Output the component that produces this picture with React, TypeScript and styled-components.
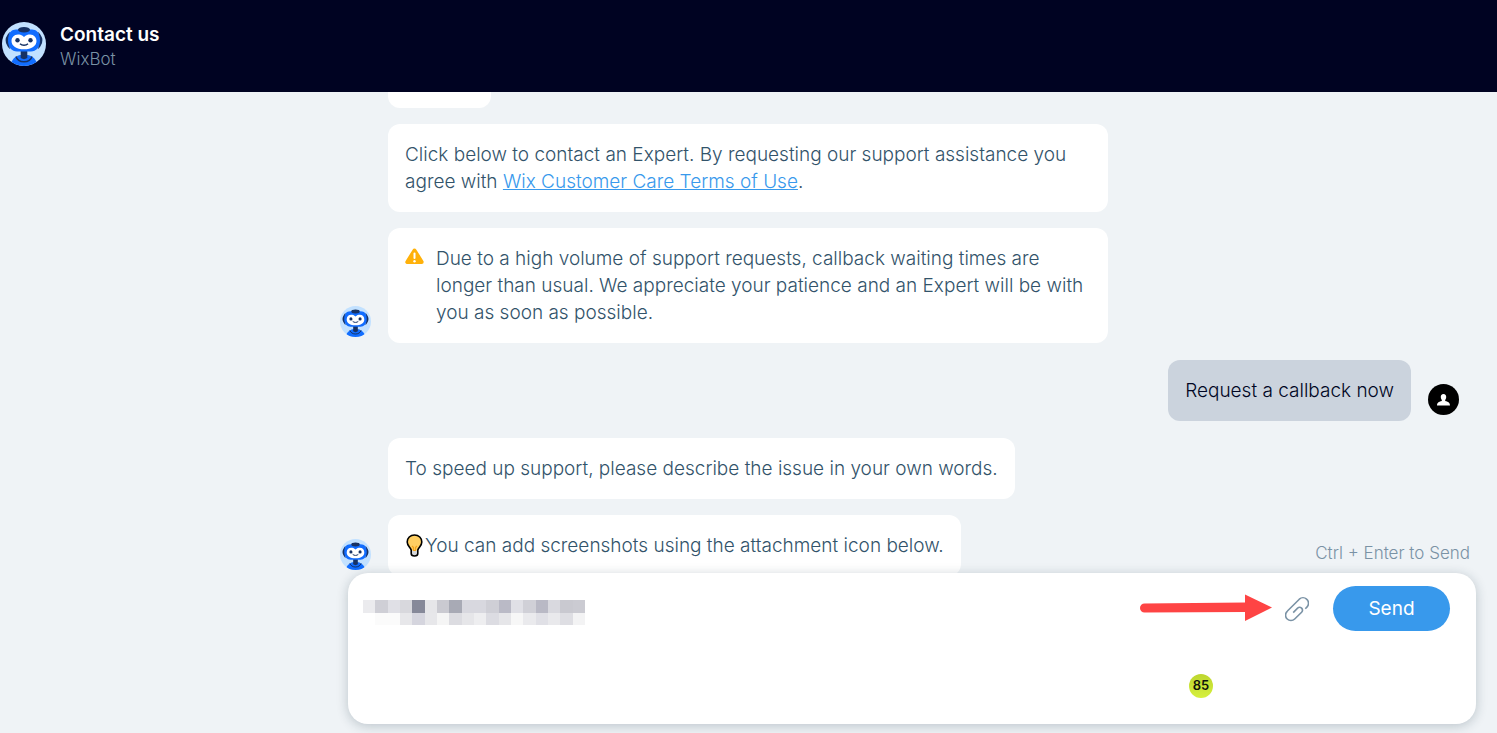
import React from "react";
import styled, { createGlobalStyle } from "styled-components";

const GlobalStyle = createGlobalStyle`
  *, *::before, *::after { box-sizing: border-box; }
  body {
    margin: 0;
    background: #eff3f6;
    font-family: "Inter", "Liberation Sans", sans-serif;
  }
`;

const Page = styled.div`
  display: flex;
  flex-direction: column;
  height: 100vh;
  overflow: hidden;
`;

const Header = styled.header`
  display: flex;
  align-items: center;
  gap: 14px;
  flex: none;
  height: 92px;
  padding: 0 2px 4px;
  background: #000322;
`;

const HeaderText = styled.div`
  display: flex;
  flex-direction: column;
  padding-top: 4px;
`;

const Title = styled.h1`
  margin: 0;
  font-size: 19px;
  line-height: 25px;
  font-weight: 600;
  color: #ffffff;
`;

const Subtitle = styled.span`
  font-size: 17px;
  line-height: 24px;
  font-weight: 300;
  color: #7a92a5;
`;

const Messages = styled.main`
  display: flex;
  flex-direction: column;
  justify-content: flex-end;
  gap: 17px;
  flex: 1;
  min-height: 0;
  overflow: hidden;
  padding: 0 38px 0 340px;
`;

const Group = styled.section<{ $own?: boolean }>`
  display: flex;
  flex: none;
  align-items: flex-end;
  justify-content: ${(p) => (p.$own ? "flex-end" : "flex-start")};
  gap: 17px;
`;

const Stack = styled.div`
  display: flex;
  flex-direction: column;
  align-items: flex-start;
  gap: 16px;
`;

const AvatarSlot = styled.div`
  display: flex;
  flex: none;
  padding-bottom: 6px;
`;

const Bubble = styled.div<{ $own?: boolean }>`
  display: flex;
  gap: 12px;
  max-width: 720px;
  padding: 17px;
  border-radius: 12px;
  font-size: 19px;
  line-height: 27px;
  font-weight: 300;
  background: ${(p) => (p.$own ? "#cbd3dd" : "#ffffff")};
  color: ${(p) => (p.$own ? "#000624" : "#32536a")};
`;

const ShortBubble = styled(Bubble)`
  width: 103px;
  height: 61px;
`;

const BulbBubble = styled(Bubble)`
  gap: 0;
`;

const Paragraph = styled.p`
  margin: 0;
`;

const TermsLink = styled.a`
  color: #3899ec;
  text-decoration: underline;
`;

const Icon = styled.svg`
  display: block;
  flex: none;
`;

const Composer = styled.form`
  position: relative;
  z-index: 1;
  display: flex;
  align-items: flex-start;
  gap: 24px;
  flex: none;
  height: 151px;
  margin: -3px 21px 9px 348px;
  padding: 13px 26px 13px 15px;
  border-radius: 20px;
  background: #ffffff;
  box-shadow: 0 2px 12px rgba(22, 45, 61, 0.24);
`;

const Field = styled.div`
  position: relative;
  flex: 1;
  align-self: stretch;
`;

const Input = styled.textarea`
  display: block;
  width: 100%;
  height: 100%;
  padding: 10px 0;
  border: 0;
  outline: 0;
  resize: none;
  background: transparent;
  font: inherit;
  font-size: 19px;
  line-height: 27px;
  color: #32536a;
`;

const Redaction = styled.svg`
  position: absolute;
  top: 14px;
  left: 0;
  pointer-events: none;
`;

const Arrow = styled.svg`
  position: absolute;
  top: 8px;
  right: -11px;
  pointer-events: none;
`;

const Score = styled.span`
  position: absolute;
  right: 48px;
  bottom: 13px;
  width: 24px;
  height: 24px;
  border-radius: 50%;
  background: linear-gradient(#bdd62f, #d6f03d);
  font-size: 13px;
  line-height: 23px;
  font-weight: 600;
  text-align: center;
  color: #10140a;
`;

const AttachButton = styled.button`
  display: flex;
  align-items: center;
  height: 45px;
  padding: 0;
  border: 0;
  background: none;
  cursor: pointer;
`;

const SendButton = styled.button`
  width: 117px;
  height: 45px;
  padding: 0;
  border: 0;
  border-radius: 23px;
  background: #3899ec;
  font: inherit;
  font-size: 19px;
  line-height: 27px;
  color: #ffffff;
  cursor: pointer;
`;

const Hint = styled.span`
  position: absolute;
  right: 6px;
  bottom: 100%;
  padding-bottom: 8px;
  font-size: 17px;
  line-height: 24px;
  font-weight: 300;
  color: #7a92a5;
`;

const BotAvatar = ({ size }: { size: number }) => (
  <Icon width={size} height={size} viewBox="0 0 44 44" role="img" aria-label="WixBot">
    <clipPath id={`bot-${size}`}>
      <circle cx="22" cy="22" r="22" />
    </clipPath>
    <g clipPath={`url(#bot-${size})`}>
      <rect width="44" height="44" fill="#c2e1ff" />
      <path d="M6.500 13.500q-3.500 5 0 10zM37.500 13.500q3.500 5 0 10z" fill="#173264" stroke="#173264" strokeWidth="2.400" />
      <path d="M8 46c0-7 5-12 10-13h8c5 1 10 6 10 13z" fill="#116dff" />
      <path d="M14 34.500c2 7 14 7 16 0" fill="none" stroke="#173264" strokeWidth="1.4" />
      <path d="M18.700 27h6.600v9c-2 1.500-4.600 1.500-6.600 0z" fill="#173264" />
      <path d="M22 9c3-2 9-2 12-.5 3 2 4 6 4 10 0 7-4 11-9 11H15c-5 0-9-4-9-11 0-4 1-8 4-10 3-1.500 9-1.500 12 .5z" fill="#116dff" />
      <ellipse cx="22" cy="7.800" rx="6" ry="2.800" fill="#173264" />
      <path d="M22 15c2-2 4-2.500 6-2.500 4 0 6.500 3 6.500 6.500 0 5-5 8.300-12.500 8.300S9.500 24 9.500 19c0-3.500 2.500-6.500 6.500-6.500 2 0 4 .5 6 2.500z" fill="#fff" />
      <circle cx="15.500" cy="18.300" r="2.200" fill="#173264" />
      <circle cx="28.500" cy="18.300" r="2.200" fill="#173264" />
      <path d="M18 21.800c2 2 6 2 8 0" fill="none" stroke="#173264" strokeWidth="1.400" />
    </g>
  </Icon>
);

const UserAvatar = () => (
  <Icon width="31" height="31" viewBox="0 0 31 31" role="img" aria-label="You">
    <circle cx="15.500" cy="15.500" r="15.500" fill="#000" />
    <path d="M15.500 10c1.800 0 2.900 1.300 2.700 3.200-.1 1.300-.7 2.200-1 2.900v1c2.600.6 4.800 1.500 4.800 4.400H9c0-2.900 2.200-3.800 4.800-4.400v-1c-.3-.7-.9-1.600-1-2.900-.2-1.900.9-3.200 2.700-3.200z" fill="#fff" />
  </Icon>
);

const WarningIcon = () => (
  <Icon width="19" height="20" viewBox="0 0 19 20" aria-hidden="true">
    <path d="M9.500 5.500L2.300 17h14.400z" fill="#ffb10a" stroke="#ffb10a" strokeWidth="4" strokeLinejoin="round" />
    <path d="M9.500 8.500v4.500" stroke="#fff" strokeWidth="2" strokeLinecap="round" />
    <circle cx="9.500" cy="16.200" r="1.200" fill="#fff" />
  </Icon>
);

const BulbIcon = () => (
  <Icon width="20" height="27" viewBox="0 0 20 27" aria-hidden="true">
    <path d="M9.500 3C5.200 3 2.200 6 2.200 10c0 3.800 3 5 4 8v3.500c0 1.500 1.300 2.500 3.300 2.500s3.300-1 3.300-2.500V18c1-3 4-4.200 4-8 0-4-3-7-7.300-7z" fill="#ffcf62" />
    <path d="M6.200 18.300h6.600v3.200c0 1.500-1.300 2.500-3.300 2.500s-3.300-1-3.300-2.500z" fill="#d5d7da" />
    <path d="M7 14l1.500 1.500v3h2v-3L12 14" fill="none" stroke="#f2a31b" strokeWidth="1.200" />
    <path d="M9.500 3C5.200 3 2.200 6 2.200 10c0 3.800 3 5 4 8v3.500c0 1.500 1.300 2.500 3.300 2.500s3.300-1 3.300-2.500V18c1-3 4-4.200 4-8 0-4-3-7-7.300-7z" fill="none" stroke="#000" strokeWidth="1.600" />
  </Icon>
);

const ClipIcon = () => (
  <Icon width="24" height="26" viewBox="0 0 24 26" aria-hidden="true">
    <path
      d="M20.300 12.700L21.900 11.100A5.300 5.300 0 0 0 21.600 3.200A5.300 5.300 0 0 0 14.300 3.200L2.200 15.300A5.300 5.300 0 0 0 2.200 23A5.300 5.300 0 0 0 9.700 23L16.600 16.200A3.100 3.100 0 0 0 16.600 12.100A3.100 3.100 0 0 0 12.600 12.100L8.200 16.600"
      fill="none"
      stroke="#7a92a5"
      strokeWidth="1.600"
    />
  </Icon>
);

const cells = [
  ["#ebebee", "#cfcfd6", "#e0e0e6", "#d8d8dd", "#868999", "#e6e6e9", "#cacad1", "#a8aab5", "#d8d8df", "#d8d8df", "#cfcfd6", "#babac6", "#e0e0e6", "#d0d0d7", "#b9b9c5", "#d9d9df", "#c9c9d0", "#cbcbd2"],
  ["#ffffff", "#fbfbfb", "#fbfbfb", "#e7e7ea", "#d5d5de", "#e7e7ea", "#f5f5f5", "#dcdce1", "#e6e6e9", "#eeeef0", "#dcdce2", "#e6e6e9", "#f7f7f7", "#eaeaed", "#e0e0e6", "#e9e9ec", "#dedee3", "#f3f3f4"],
];
const edge = (i: number) => Math.round((i * 222) / 18);

const RedactedText = () => (
  <Redaction width="222" height="25" viewBox="0 0 222 25" shapeRendering="crispEdges" aria-hidden="true">
    {cells.map((row, r) =>
      row.map((fill, c) => (
        <rect key={`${r}-${c}`} x={edge(c)} y={r * 13} width={edge(c + 1) - edge(c)} height={r ? 12 : 13} fill={fill} />
      ))
    )}
  </Redaction>
);

export default function App() {
  return (
    <Page>
      <GlobalStyle />
      <Header>
        <BotAvatar size={44} />
        <HeaderText>
          <Title>Contact us</Title>
          <Subtitle>WixBot</Subtitle>
        </HeaderText>
      </Header>

      <Messages>
        <Group>
          <AvatarSlot>
            <BotAvatar size={31} />
          </AvatarSlot>
          <Stack>
            <ShortBubble />
            <Bubble>
              <Paragraph>
                Click below to contact an Expert. By requesting our support assistance you agree with{" "}
                <TermsLink href="#terms">Wix Customer Care Terms of Use</TermsLink>.
              </Paragraph>
            </Bubble>
            <Bubble>
              <WarningIcon />
              <Paragraph>
                Due to a high volume of support requests, callback waiting times are longer than usual. We appreciate
                your patience and an Expert will be with you as soon as possible.
              </Paragraph>
            </Bubble>
          </Stack>
        </Group>

        <Group $own>
          <Bubble $own>
            <Paragraph>Request a callback now</Paragraph>
          </Bubble>
          <AvatarSlot>
            <UserAvatar />
          </AvatarSlot>
        </Group>

        <Group>
          <AvatarSlot>
            <BotAvatar size={31} />
          </AvatarSlot>
          <Stack>
            <Bubble>
              <Paragraph>To speed up support, please describe the issue in your own words.</Paragraph>
            </Bubble>
            <BulbBubble>
              <BulbIcon />
              <Paragraph>You can add screenshots using the attachment icon below.</Paragraph>
            </BulbBubble>
          </Stack>
        </Group>
      </Messages>

      <Composer onSubmit={(e) => e.preventDefault()}>
        <Hint>Ctrl + Enter to Send</Hint>
        <Field>
          <Input aria-label="Message" />
          <RedactedText />
          <Arrow width="132" height="28" viewBox="0 0 132 28" aria-hidden="true">
            <path d="M4.500 9.500L105 8.500V0.500L132 13.500L105 27V18L4.500 18.500A4.500 4.500 0 0 1 4.500 9.500z" fill="#fe4444" />
          </Arrow>
          <Score>85</Score>
        </Field>
        <AttachButton type="button" aria-label="Attach a file">
          <ClipIcon />
        </AttachButton>
        <SendButton type="submit">Send</SendButton>
      </Composer>
    </Page>
  );
}
